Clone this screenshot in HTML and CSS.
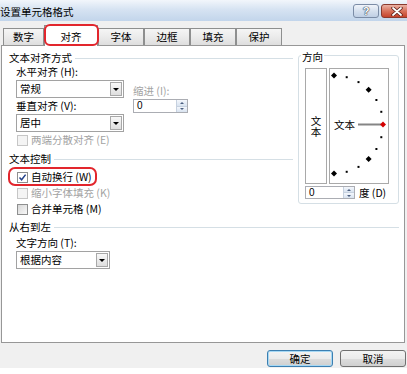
FILE: index.html
```html
<!doctype html>
<html>
  <head>
    <meta charset="utf-8" />
    <title>设置单元格格式</title>
    <link rel="stylesheet" href="styles.css">
  </head>
  <body>
    <div class="dialog">
      <div class="titlebar">
        <span class="title">设置单元格格式</span>
        <div class="caption">
          <span class="cap-btn help">?</span>
          <span class="cap-btn close">
            <svg width="12" height="9" viewBox="0 0 12 9">
              <path d="M2 1 L10 8 M10 1 L2 8" stroke="#5a1f18" stroke-width="3.4" stroke-linecap="round" />
              <path d="M2 1 L10 8 M10 1 L2 8" stroke="#fff" stroke-width="1.8" stroke-linecap="round" />
            </svg>
          </span>
        </div>
      </div>

      <div class="tabs">
        <div class="tab first">数字</div>
        <div class="tab active">对齐</div>
        <div class="tab">字体</div>
        <div class="tab">边框</div>
        <div class="tab">填充</div>
        <div class="tab">保护</div>
      </div>

      <div class="panel">
        <div class="left">
          <div class="group-title">文本对齐方式</div>
          <div class="align-grid">
            <div>
              <div class="field-label">水平对齐 (H):</div>
              <div class="combo first-combo">
                <span class="combo-value">常规</span>
                <span class="combo-btn"></span>
              </div>
              <div class="field-label">垂直对齐 (V):</div>
              <div class="combo">
                <span class="combo-value">居中</span>
                <span class="combo-btn"></span>
              </div>
            </div>
            <div>
              <div class="field-label disabled indent-label">缩进 (I):</div>
              <div class="spin">
                <span class="spin-value">0</span>
                <span class="spin-btns"><span class="up"></span><span class="down"></span></span>
              </div>
            </div>
          </div>
          <div class="check disabled distribute"><span class="box"></span>两端分散对齐 (E)</div>

          <div class="group-title control-title">文本控制</div>
          <div class="check-list">
            <div class="check tall marked">
              <span class="box checked">
                <svg width="9" height="9" viewBox="0 0 9 9">
                  <path d="M1.5 4.5 L3.6 6.8 L7.6 1.6" stroke="#22418a" stroke-width="1.5" fill="none" />
                </svg>
              </span>自动换行 (W)
            </div>
            <div class="check tall disabled"><span class="box"></span>缩小字体填充 (K)</div>
            <div class="check tall"><span class="box"></span>合并单元格 (M)</div>
          </div>
        </div>

        <div class="orient">
          <span class="orient-title">方向</span>
          <div class="orient-body">
            <div class="vtext">文本</div>
            <div class="dial">
              <svg width="58" height="114" viewBox="0 0 58 114">
                <line x1="28" y1="55.5" x2="51" y2="55.5" stroke="#858585" stroke-width="2" />
                <rect x="15.7" y="7.2" width="2" height="2" />
                <rect x="27.5" y="12.1" width="2" height="2" />
                <rect x="45.4" y="30" width="2" height="2" />
                <rect x="50.3" y="41.8" width="2" height="2" />
                <rect x="50.3" y="67.2" width="2" height="2" />
                <rect x="45.4" y="79" width="2" height="2" />
                <rect x="27.5" y="96.9" width="2" height="2" />
                <rect x="15.7" y="101.8" width="2" height="2" />
                <polygon points="4,3.5 7,6.5 4,9.5 1,6.5" />
                <polygon points="38.6,17.8 41.6,20.8 38.6,23.8 35.6,20.8" />
                <polygon points="38.6,87.1 41.6,90.1 38.6,93.1 35.6,90.1" />
                <polygon points="4,101.5 7,104.5 4,107.5 1,104.5" />
                <polygon points="53,52.5 56,55.5 53,58.5 50,55.5" fill="#d40000" />
                <text x="4" y="59.5">文本</text>
              </svg>
            </div>
          </div>
          <div class="degree">
            <div class="spin degree-spin">
              <span class="spin-value">0</span>
              <span class="spin-btns"><span class="up"></span><span class="down"></span></span>
            </div>
            <span class="degree-label">度 (D)</span>
          </div>
        </div>

        <div class="rtl">
          <div class="group-title">从右到左</div>
          <div class="field-label rtl-label">文字方向 (T):</div>
          <div class="combo rtl-combo">
            <span class="combo-value">根据内容</span>
            <span class="combo-btn"></span>
          </div>
        </div>
      </div>

      <div class="footer">
        <button class="btn default">确定</button>
        <button class="btn">取消</button>
      </div>
    </div>
  </body>
</html>
```

FILE: styles.css
```css
html,
body {
  margin: 0;
  padding: 0;
  background: #fff;
}

body {
  font-family: 'Noto Sans CJK SC', 'Noto Sans', sans-serif;
  font-size: 10.5px;
  line-height: 12px;
  color: #000;
}

.dialog {
  width: 407px;
  height: 368px;
  background: #f0f0f0;
  overflow: hidden;
}

/* title bar */
.titlebar {
  height: 21px;
  display: flex;
  justify-content: space-between;
  align-items: flex-start;
  background: linear-gradient(#f2f6fb, #d6e3f2 45%, #c2d5eb);
}

.title {
  padding-top: 6px;
}

.caption {
  display: flex;
  gap: 2px;
  margin-top: 4px;
  margin-right: -5px;
}

.cap-btn {
  box-sizing: border-box;
  height: 14px;
  border: 1px solid #7b8ca6;
  border-radius: 3px;
  display: flex;
  align-items: center;
  justify-content: center;
}

.help {
  width: 26px;
  background: linear-gradient(#f0f4fa, #d5e0ee 50%, #bfcfe4);
  font-family: 'Liberation Sans', sans-serif;
  font-weight: bold;
  font-size: 11px;
  color: #fff;
  text-shadow: 0 0 1px #2c3a4e, 0 0 1px #2c3a4e, 0 0 1px #2c3a4e;
}

.close {
  width: 31px;
  border-color: #8a3a2e;
  background: linear-gradient(#eab2a4, #d8725c 50%, #c5432c);
}

/* tabs */
.tabs {
  height: 24px;
  display: flex;
  align-items: flex-end;
  padding-left: 3px;
}

.tab {
  box-sizing: border-box;
  width: 46px;
  height: 17px;
  border: 1px solid #8e8f8f;
  border-bottom: none;
  background: linear-gradient(#f5f5f5, #ebebeb 50%, #dedede);
  text-align: center;
  line-height: 15px;
}

.tab.first {
  width: 41px;
}

.tab.active {
  position: relative;
  z-index: 1;
  width: 54px;
  height: 21px;
  margin-bottom: -1px;
  background: #fff;
  padding-top: 5px;
  line-height: 12px;
}

.tab.active::after {
  content: '';
  position: absolute;
  left: -1px;
  right: -2px;
  top: -2px;
  bottom: 0;
  border: 2px solid #e2262d;
  border-radius: 6px;
}

/* panel */
.panel {
  box-sizing: border-box;
  width: 404px;
  height: 298px;
  margin-left: 1px;
  border: 1px solid #979797;
  background: #fff;
  display: grid;
  grid-template-columns: 1fr 101px;
  column-gap: 5px;
  align-content: start;
  padding: 6px 5px 0 7px;
}

.group-title {
  display: flex;
  align-items: center;
  height: 12px;
}

.group-title::after {
  content: '';
  flex: 1;
  height: 1px;
  margin-left: 3px;
  background: #d5dfe5;
}

.control-title {
  margin-top: 7px;
}

.field-label {
  height: 12px;
  white-space: nowrap;
}

.disabled {
  color: #a3a3a3;
}

.align-grid {
  display: grid;
  grid-template-columns: 108px 55px;
  column-gap: 9px;
  padding-left: 7px;
  margin-top: 2px;
}

.align-grid .field-label + .combo {
  margin-top: 2px;
}

.align-grid .combo + .field-label {
  margin-top: 2px;
}

.align-grid .first-combo {
  margin-top: 4px;
}

.indent-label {
  margin-top: 19px;
  margin-bottom: 2px;
}

/* combo box */
.combo {
  box-sizing: border-box;
  display: flex;
  align-items: center;
  height: 18px;
  border: 1px solid #a2a2a2;
  background: #fff;
  padding-left: 3px;
}

.combo-value {
  flex: 1;
}

.combo-btn {
  box-sizing: border-box;
  width: 12px;
  height: 14px;
  margin-right: 1px;
  border: 1px solid #a8a8a8;
  background: linear-gradient(#f8f8f8, #dedede);
  display: flex;
  align-items: center;
  justify-content: center;
}

.combo-btn::before {
  content: '';
  border-left: 3px solid transparent;
  border-right: 3px solid transparent;
  border-top: 3px solid #000;
}

/* spinner */
.spin {
  box-sizing: border-box;
  display: flex;
  height: 14px;
  border: 1px solid #abadb3;
  background: #fff;
}

.spin-value {
  flex: 1;
  padding-left: 3px;
  font-family: 'Liberation Sans', sans-serif;
  font-size: 10px;
  line-height: 12px;
}

.spin-btns {
  width: 11px;
  display: flex;
  flex-direction: column;
}

.spin-btns span {
  flex: 1;
  display: flex;
  align-items: center;
  justify-content: center;
  background: linear-gradient(#f4f7fc, #d8e3f0);
  border-left: 1px solid #c6d1df;
}

.spin-btns .up {
  border-bottom: 1px solid #c6d1df;
}

.spin-btns .up::before {
  content: '';
  border-left: 2px solid transparent;
  border-right: 2px solid transparent;
  border-bottom: 2px solid #4b5f80;
}

.spin-btns .down::before {
  content: '';
  border-left: 2px solid transparent;
  border-right: 2px solid transparent;
  border-top: 2px solid #4b5f80;
}

/* checkboxes */
.check {
  position: relative;
  display: flex;
  align-items: center;
  gap: 3px;
  height: 12px;
  padding-left: 8px;
  white-space: nowrap;
}

.check.tall {
  height: 16px;
}

.distribute {
  margin-top: 2px;
}

.check-list {
  margin-top: 4px;
}

.box {
  box-sizing: border-box;
  width: 11px;
  height: 11px;
  border: 1px solid #8e8f8f;
  background: linear-gradient(135deg, #d8d8d8, #f8f8f8);
  display: flex;
  align-items: center;
  justify-content: center;
}

.box.checked {
  background: #fff;
}

.disabled .box {
  border-color: #c6c6c6;
  background: #f4f4f4;
}

.check.marked::after {
  content: '';
  position: absolute;
  left: -1px;
  top: -2px;
  width: 89px;
  height: 19px;
  box-sizing: border-box;
  border: 2px solid #e2262d;
  border-radius: 7px;
}

/* orientation */
.orient {
  position: relative;
  box-sizing: border-box;
  height: 149px;
  margin-top: 3px;
  border: 1px solid #d5dfe5;
  border-radius: 3px;
  padding: 12px 0 0 6px;
}

.orient-title {
  position: absolute;
  top: -5px;
  left: 2px;
  padding: 0 1px;
  background: #fff;
}

.orient-body {
  display: flex;
  gap: 2px;
  height: 116px;
}

.vtext {
  box-sizing: border-box;
  width: 22px;
  border: 1px solid #a9a9a9;
  display: flex;
  align-items: center;
  justify-content: center;
  writing-mode: vertical-rl;
  text-orientation: upright;
  line-height: 11px;
}

.dial {
  box-sizing: border-box;
  width: 60px;
  border: 1px solid #a9a9a9;
}

.dial svg {
  display: block;
}

.dial text {
  font-family: 'Noto Sans CJK SC', sans-serif;
  font-size: 10.5px;
}

.degree {
  display: flex;
  align-items: center;
  margin-top: 2px;
}

.degree-spin {
  width: 50px;
  height: 13px;
}

.degree-spin .spin-value {
  line-height: 11px;
}

.degree-label {
  margin-left: 4px;
}

/* right to left */
.rtl {
  grid-column: 1 / -1;
  margin-top: 4px;
}

.rtl-label {
  margin-top: 4px;
  padding-left: 7px;
}

.rtl-combo {
  width: 94px;
  margin: 2px 0 0 7px;
}

/* footer */
.footer {
  height: 25px;
  box-sizing: border-box;
  display: flex;
  justify-content: flex-end;
  gap: 7px;
  padding: 7px 1px 0 0;
}

.btn {
  box-sizing: border-box;
  width: 66px;
  height: 17px;
  padding: 0;
  border: 1px solid #707070;
  border-radius: 3px;
  background: linear-gradient(#f3f3f3, #ebebeb 50%, #dddddd 50%, #d0d0d0);
  font: inherit;
  line-height: 14px;
  color: #000;
  text-align: center;
}

.btn.default {
  border-color: #3c7fb1;
  box-shadow: inset 0 0 0 1px #a6d8f4;
}
```
